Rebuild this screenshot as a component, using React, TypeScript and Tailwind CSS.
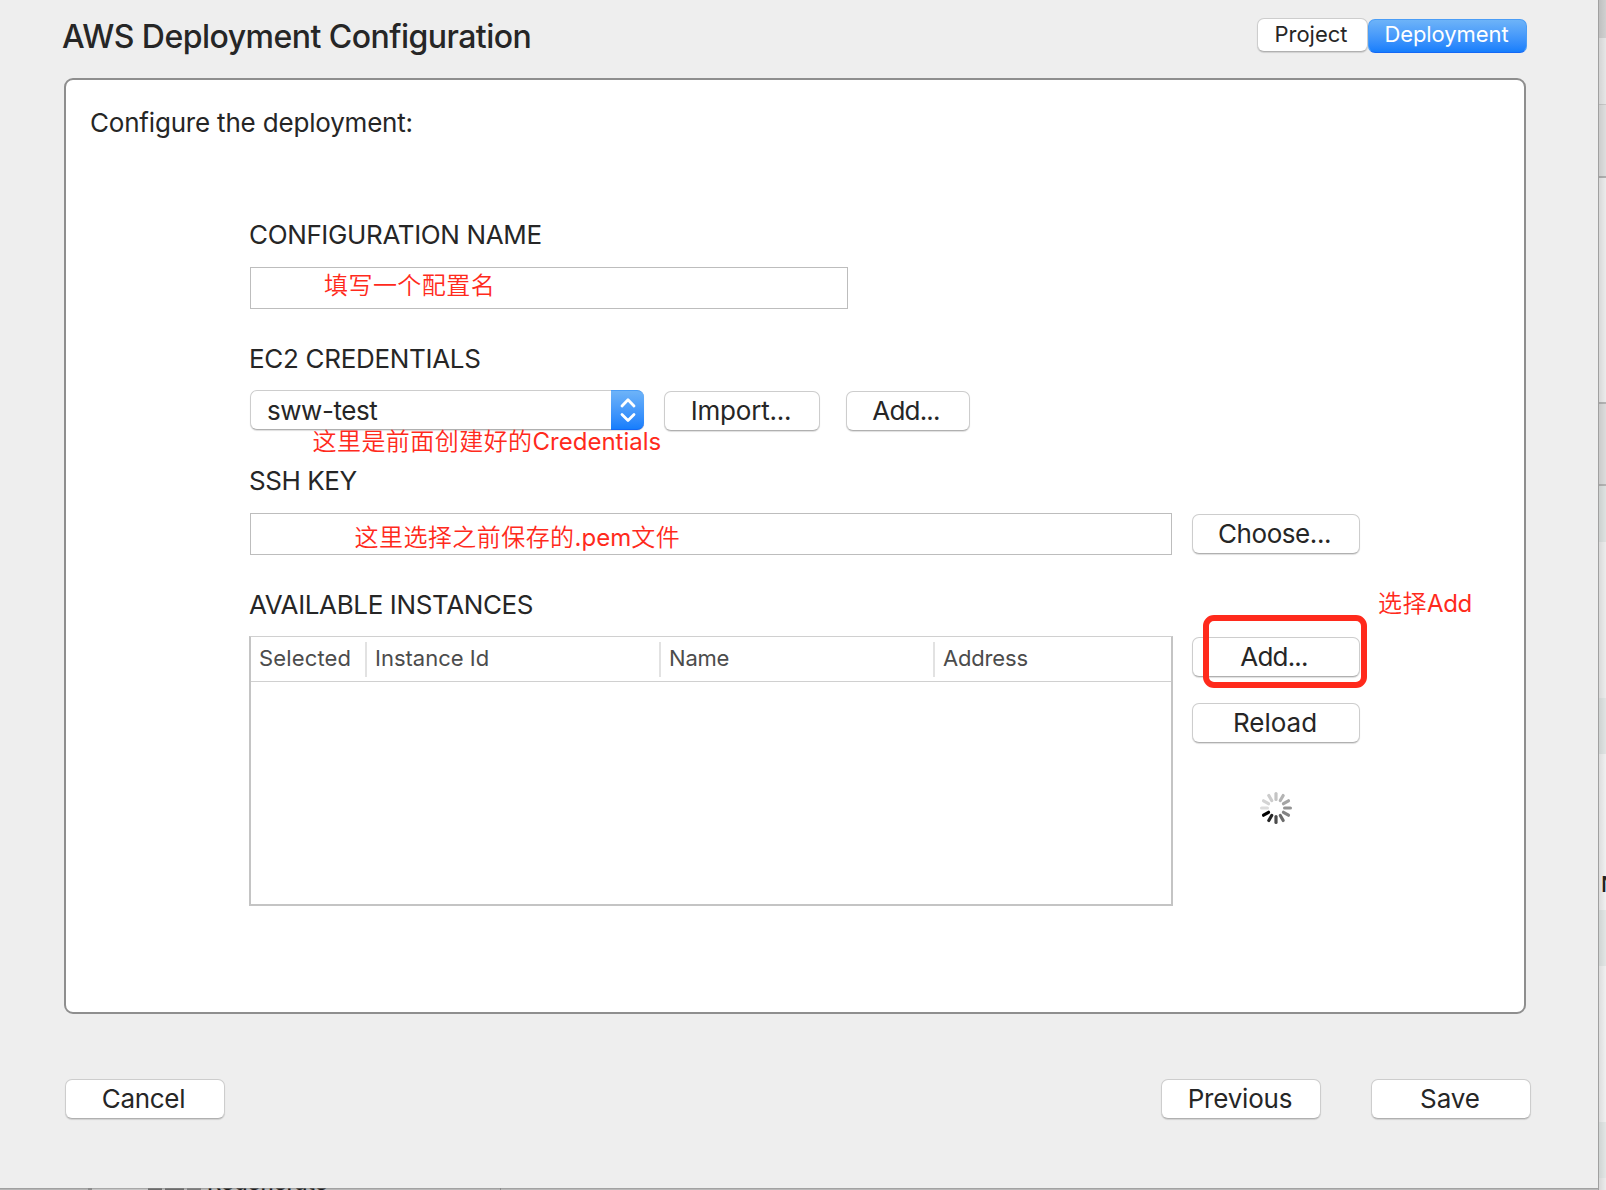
import type { ReactNode } from "react";

function PushButton({ className = "", children }: { className?: string; children: ReactNode }) {
  return (
    <button
      className={`flex h-10 shrink-0 items-center justify-center whitespace-nowrap rounded-[7px] border border-[#cdcdcd] border-b-[#b0b0b0] bg-white pb-px text-[26px] leading-8 shadow-[0_1px_1px_rgba(0,0,0,0.13)] ${className}`}
    >
      {children}
    </button>
  );
}

function Label({ className = "", children }: { className?: string; children: ReactNode }) {
  return <div className={`h-8 whitespace-nowrap text-[26px] leading-8 ${className}`}>{children}</div>;
}

function Note({ className = "", children }: { className?: string; children: ReactNode }) {
  return (
    <span
      className={`pointer-events-none absolute whitespace-nowrap font-['Inter','Noto_Sans_CJK_SC',sans-serif] text-[24px] leading-8 text-[#ff2a1c] ${className}`}
    >
      {children}
    </span>
  );
}

function Cjk({ children }: { children: ReactNode }) {
  return <span className="font-['Noto_Sans_CJK_SC',sans-serif] font-[350] tracking-[0.45px]">{children}</span>;
}

const spokes = ["#c4c4c4", "#b4b4b4", "#a4a4a4", "#949494", "#848484", "#6c6c6c", "#4c4c4c", "#242424", "#000000", "#dcdcdc", "#d4d4d4", "#cccccc"];

function Spinner() {
  return (
    <svg width="32" height="32" viewBox="-16 -16 32 32">
      {spokes.map((color, i) => (
        <line
          key={i}
          x1="0"
          y1="-8.6"
          x2="0"
          y2="-14.4"
          stroke={color}
          strokeWidth="3.2"
          strokeLinecap="round"
          transform={`rotate(${i * 30})`}
        />
      ))}
    </svg>
  );
}

function SideStrip() {
  return (
    <div className="relative flex w-2 shrink-0 flex-col overflow-hidden border-l border-[#a0a0a0] bg-[#ebebeb]">
      <div className="h-[38px] shrink-0 bg-[#d0d0d0]" />
      <div className="h-[66px] shrink-0 bg-[#e6e6e6]" />
      <div className="h-px shrink-0 bg-[#c8c8c8]" />
      <div className="h-[71px] shrink-0 bg-[#dedede]" />
      <div className="h-[2px] shrink-0 bg-[#b0b0b0]" />
      <div className="h-[224px] shrink-0 bg-[#ebebeb]" />
      <div className="h-[2px] shrink-0 bg-[#b4b4b4]" />
      <div className="h-[80px] shrink-0 bg-[#dcdcdc]" />
      <div className="h-[2px] shrink-0 bg-[#b4b4b4]" />
      <div className="h-[56px] shrink-0 bg-[#dee2e1]" />
      <div className="h-[156px] shrink-0 bg-[#ececec]" />
      <div className="h-[56px] shrink-0 bg-[#e0e4e3]" />
      <div className="h-[156px] shrink-0 bg-[#f0f0f0] pl-[2px] pt-[116px]">
        <span className="block text-[22px] font-medium leading-[28px] text-[#222]">N</span>
      </div>
      <div className="h-[56px] shrink-0 bg-[#e2e6e5]" />
      <div className="h-[156px] shrink-0 bg-[#f0f0f0]" />
      <div className="h-[56px] shrink-0 bg-[#e2e6e5]" />
      <div className="absolute inset-0 bg-linear-to-r from-black/8 to-transparent" />
    </div>
  );
}

function BottomStrip() {
  return (
    <div className="relative flex h-[2px] w-[1598px] shrink-0 overflow-hidden bg-[#b8b8b8]">
      <div className="w-[88px] bg-[#b4b4b4]" />
      <div className="w-[4px] bg-[#8c8c8c]" />
      <div className="w-[56px] bg-[#c4c4c4]" />
      <div className="w-[14px] bg-[#6c6c6c]" />
      <div className="w-[3px]" />
      <div className="w-[19px] bg-[#6c6c6c]" />
      <div className="w-[3px]" />
      <div className="w-[14px] bg-[#7c7c7c]" />
      <div className="relative w-[299px]">
        <span className="absolute left-[6px] top-[-22px] text-[22px] font-medium leading-8 text-[#1c1c1c]">Regenerate</span>
      </div>
      <div className="w-px bg-[#8c8c8c]" />
      <div className="absolute inset-x-0 top-0 h-px bg-[#8c8c8c]/50" />
    </div>
  );
}

export default function App() {
  return (
    <div className="flex h-[1190px] w-[1606px] overflow-hidden bg-[#eee] font-['Inter',sans-serif] text-[#262626]">
      <div className="flex w-[1598px] shrink-0 flex-col">
        <div className="flex h-[1188px] shrink-0 flex-col bg-[#eee]">
          <header className="flex h-[78px] shrink-0 items-start pl-[62px]">
            <h1 className="mt-[17px] whitespace-nowrap text-[32px] font-medium leading-10 tracking-[-0.53px]">
              AWS Deployment Configuration
            </h1>
            <div className="ml-auto mr-[71px] mt-[18px] flex items-start">
              <button className="h-[34px] w-[111px] rounded-[7px] border border-[#cdcdcd] border-b-[#b0b0b0] bg-white pb-[2px] pr-[3px] text-[22px] leading-[30px] shadow-[0_1px_1px_rgba(0,0,0,0.13)]">
                Project
              </button>
              <button className="mt-px h-[34px] w-[159px] whitespace-nowrap rounded-[7px] border border-[#4a9df6] border-b-[#1468f5] bg-linear-to-b from-[#6db3f8] to-[#157efc] pb-[3px] pr-[2px] text-[22px] leading-[29px] tracking-[-0.08px] text-white">
                Deployment
              </button>
            </div>
          </header>

          <main className="ml-16 flex h-[936px] w-[1462px] shrink-0 flex-col rounded-[9px] border-2 border-[#8e8e8e] bg-white">
            <Label className="ml-6 mt-[27px] tracking-[-0.19px]">Configure the deployment:</Label>

            <div className="ml-[184px] mt-[80px] flex flex-col items-start">
              <Label className="-ml-px tracking-[-0.36px]">CONFIGURATION NAME</Label>
              <div className="relative mt-4 h-[42px] w-[598px] border border-[#bdbdbd] bg-white">
                <Note className="left-[73px] top-0">
                  <Cjk>填写一个配置名</Cjk>
                </Note>
              </div>

              <Label className="-ml-px mt-[34px] tracking-[-0.31px]">EC2 CREDENTIALS</Label>
              <div className="relative mt-[15px] flex items-start">
                <div className="flex h-10 w-[394px] rounded-[7px] border border-r-0 border-[#cdcdcd] border-b-[#b0b0b0] bg-white shadow-[0_1px_1px_rgba(0,0,0,0.13)]">
                  <span className="flex-1 pl-4 text-[26px] leading-[39px] tracking-[-0.46px]">sww-test</span>
                  <span className="-mb-px -mt-px flex w-[33px] items-center justify-center rounded-r-[7px] border-b border-t border-b-[#1468f5] border-t-[#4a9df6] bg-linear-to-b from-[#6db3f8] to-[#157efc]">
                    <svg width="18" height="26" viewBox="0 0 18 26" fill="none" stroke="white" strokeWidth="2.8" strokeLinecap="round" strokeLinejoin="round">
                      <path d="M3 9 9 2.7 15 9M3 17.5 9 23.5 15 17.5" />
                    </svg>
                  </span>
                </div>
                <PushButton className="ml-5 mt-px w-[156px] pr-[2px] tracking-[-0.2px]">Import...</PushButton>
                <PushButton className="ml-[26px] mt-px w-[124px] pr-[4px] tracking-[-0.8px]">Add...</PushButton>
                <Note className="left-[62.5px] top-[34px]">
                  <Cjk>这里是前面创建好的</Cjk>Credentials
                </Note>
              </div>

              <Label className="-ml-px mt-[34px] tracking-[-0.45px]">SSH KEY</Label>
              <div className="mt-4 flex items-start">
                <div className="relative h-[42px] w-[922px] border border-[#bdbdbd] bg-white">
                  <Note className="left-[103.5px] top-[6px]">
                    <Cjk>这里选择之前保存的</Cjk>.pem<Cjk>文件</Cjk>
                  </Note>
                </div>
                <PushButton className="ml-5 mt-px w-[168px] pr-[3px] tracking-[-0.42px]">Choose...</PushButton>
              </div>

              <Label className="-ml-px mt-[34px] tracking-[-0.37px]">AVAILABLE INSTANCES</Label>
              <div className="-ml-px mt-[15px] flex items-start">
                <div className="flex h-[270px] w-[924px] flex-col border-2 border-t border-[#c4c4c4] border-t-[#d0d0d0] bg-white">
                  <div className="flex h-[45px] items-center border-b border-[#d0d0d0] text-[22px] leading-[30px] text-[#4c4c4c]">
                    <div className="flex h-[35px] w-[116px] items-center border-r-2 border-[#e2e2e2] pb-[2px] pl-2 tracking-[0.15px]">Selected</div>
                    <div className="flex h-[35px] w-[294px] items-center border-r-2 border-[#e2e2e2] pb-[2px] pl-2">Instance Id</div>
                    <div className="flex h-[35px] w-[274px] items-center border-r-2 border-[#e2e2e2] pb-[2px] pl-2 tracking-[-0.2px]">Name</div>
                    <div className="flex h-[35px] items-center pb-[2px] pl-2 tracking-[-0.17px]">Address</div>
                  </div>
                </div>
                <div className="relative ml-[19px] mt-px flex w-[168px] flex-col">
                  <PushButton className="w-[168px] pr-[4px] tracking-[-0.8px]">Add...</PushButton>
                  <PushButton className="mt-[26px] w-[168px] pr-[2px]">Reload</PushButton>
                  <div className="mt-[49px] flex justify-center">
                    <Spinner />
                  </div>
                  <div className="pointer-events-none absolute left-[11px] top-[-22px] h-[73px] w-[164px] rounded-[11px] border-6 border-[#ff2a1c]" />
                  <Note className="left-[186px] top-[-51px] tracking-[-0.3px]">
                    <Cjk>选择</Cjk>Add
                  </Note>
                </div>
              </div>
            </div>
          </main>

          <footer className="mt-[65px] flex pl-[65px]">
            <PushButton className="w-[160px] pr-[3px] tracking-[-0.3px]">Cancel</PushButton>
            <PushButton className="ml-[936px] w-[160px] pr-[2px] tracking-[-0.2px]">Previous</PushButton>
            <PushButton className="ml-[50px] w-[160px] pr-[2px] tracking-[-0.1px]">Save</PushButton>
          </footer>
        </div>
        <BottomStrip />
      </div>
      <SideStrip />
    </div>
  );
}
